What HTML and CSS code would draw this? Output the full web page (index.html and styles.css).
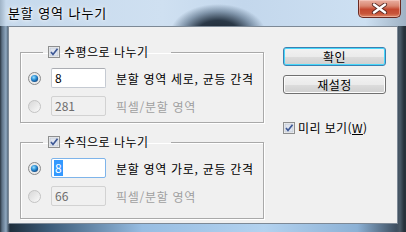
FILE: index.html
```html
<!DOCTYPE html>
<html lang="ko">
<head>
<meta charset="utf-8">
<link rel="stylesheet" href="styles.css">
</head>
<body>
<div class="window">
  <div class="titlebar">
    <span class="title">분할 영역 나누기</span>
    <div class="close">
      <svg width="17" height="11" viewBox="0 0 17 11"><path d="M3 1.5 L14 9.5 M14 1.5 L3 9.5" stroke="#5a2a24" stroke-width="4.2" stroke-linecap="round"/><path d="M3 1.5 L14 9.5 M14 1.5 L3 9.5" stroke="#ffffff" stroke-width="2.4" stroke-linecap="round"/></svg>
    </div>
  </div>
  <div class="client">
    <div class="groups">
      <fieldset class="group g1">
        <legend class="legend">
          <svg class="chk" width="12" height="12" viewBox="0 0 12 12"><rect x="0.5" y="0.5" width="11" height="11" fill="#f4f4f4" stroke="#8e8f8f"/><rect x="2" y="2" width="8" height="8" fill="#dfe4ee" stroke="#b7bec9" stroke-width="0.6"/><path d="M3 6 L5 8.5 L9.5 2.8" fill="none" stroke="#3d5895" stroke-width="1.7"/></svg>
          <span>수평으로 나누기</span>
        </legend>
        <div class="row">
          <svg class="radio" width="13" height="13" viewBox="0 0 13 13"><defs><radialGradient id="dot1" cx="0.4" cy="0.35" r="0.7"><stop offset="0" stop-color="#9fe3ff"/><stop offset="0.5" stop-color="#2b8fd6"/><stop offset="1" stop-color="#0d3f7a"/></radialGradient></defs><circle cx="6.5" cy="6.5" r="6" fill="#e9e9e9" stroke="#8a8a8a"/><circle cx="6.5" cy="6.5" r="3.6" fill="url(#dot1)"/></svg>
          <span class="field">8</span>
          <span class="label">분할 영역 세로, 균등 간격</span>
        </div>
        <div class="row">
          <svg class="radio" width="13" height="13" viewBox="0 0 13 13"><defs><linearGradient id="off1" x1="0" y1="0" x2="1" y2="1"><stop offset="0" stop-color="#d6d6d6"/><stop offset="1" stop-color="#fbfbfb"/></linearGradient></defs><circle cx="6.5" cy="6.5" r="6" fill="url(#off1)" stroke="#c3c3c3"/></svg>
          <span class="field off">281</span>
          <span class="label dim">픽셀/분할 영역</span>
        </div>
      </fieldset>
      <fieldset class="group g2">
        <legend class="legend">
          <svg class="chk" width="12" height="12" viewBox="0 0 12 12"><rect x="0.5" y="0.5" width="11" height="11" fill="#f4f4f4" stroke="#8e8f8f"/><rect x="2" y="2" width="8" height="8" fill="#dfe4ee" stroke="#b7bec9" stroke-width="0.6"/><path d="M3 6 L5 8.5 L9.5 2.8" fill="none" stroke="#3d5895" stroke-width="1.7"/></svg>
          <span>수직으로 나누기</span>
        </legend>
        <div class="row">
          <svg class="radio" width="13" height="13" viewBox="0 0 13 13"><defs><radialGradient id="dot2" cx="0.4" cy="0.35" r="0.7"><stop offset="0" stop-color="#9fe3ff"/><stop offset="0.5" stop-color="#2b8fd6"/><stop offset="1" stop-color="#0d3f7a"/></radialGradient></defs><circle cx="6.5" cy="6.5" r="6" fill="#e9e9e9" stroke="#8a8a8a"/><circle cx="6.5" cy="6.5" r="3.6" fill="url(#dot2)"/></svg>
          <span class="field focus"><span class="sel">8</span></span>
          <span class="label">분할 영역 가로, 균등 간격</span>
        </div>
        <div class="row">
          <svg class="radio" width="13" height="13" viewBox="0 0 13 13"><defs><linearGradient id="off2" x1="0" y1="0" x2="1" y2="1"><stop offset="0" stop-color="#d6d6d6"/><stop offset="1" stop-color="#fbfbfb"/></linearGradient></defs><circle cx="6.5" cy="6.5" r="6" fill="url(#off2)" stroke="#c3c3c3"/></svg>
          <span class="field off">66</span>
          <span class="label dim">픽셀/분할 영역</span>
        </div>
      </fieldset>
    </div>
    <div class="side">
      <div class="btn default">확인</div>
      <div class="btn">재설정</div>
      <div class="preview">
        <svg class="chk" width="12" height="12" viewBox="0 0 12 12"><rect x="0.5" y="0.5" width="11" height="11" fill="#f4f4f4" stroke="#8e8f8f"/><rect x="2" y="2" width="8" height="8" fill="#dfe4ee" stroke="#b7bec9" stroke-width="0.6"/><path d="M3 6 L5 8.5 L9.5 2.8" fill="none" stroke="#3d5895" stroke-width="1.7"/></svg>
        <span>미리 보기(<u>W</u>)</span>
      </div>
    </div>
  </div>
</div>
</body>
</html>
```

FILE: styles.css
```css
* { box-sizing: border-box; }
html, body { margin: 0; padding: 0; }
body {
  width: 406px;
  height: 232px;
  overflow: hidden;
  font-family: "Noto Sans CJK KR", "Noto Sans", sans-serif;
  font-size: 12px;
  color: #000;
}
.window {
  width: 406px;
  height: 232px;
  display: flex;
  flex-direction: column;
  background:
    linear-gradient(to right, #2a3540 0px, #5d7185 2px, #8fa8c0 6px, rgba(0,0,0,0) 10px, rgba(0,0,0,0) 396px, #4a5a68 400px, #27313a 404px),
    linear-gradient(to right, #17222c 0%, #3b5b78 12%, #97bde2 35%, #b3d2ef 65%, #8cb1d5 88%, #2b3744 100%);
}
.titlebar {
  height: 26px;
  display: flex;
  justify-content: space-between;
  align-items: flex-start;
  background:
    radial-gradient(ellipse 48px 30px at 218px 34px, #1b2530 0%, #2a3847 45%, rgba(70,92,115,0.55) 75%, rgba(120,150,180,0) 100%),
    linear-gradient(to right, #9fb3c6 0px, #c6d9ec 6px, #cfe0f1 40%, #c3d7ec 60%, #cde0f2 90%, #9fb2c4 100%);
}
.title {
  padding-left: 8px;
  padding-top: 4px;
  font-size: 13px;
  line-height: 17px;
  letter-spacing: 0.9px;
  text-shadow: 0 0 6px #fff, 0 0 3px #fff;
}
.close {
  width: 43px;
  height: 18px;
  margin-right: 5px;
  border: 1px solid #6a2a22;
  border-top: none;
  border-radius: 0 0 5px 5px;
  background: linear-gradient(to bottom, #eab0a2 0%, #d98670 35%, #c4482f 55%, #c8553a 80%, #df8a6a 100%);
  box-shadow: inset 0 0 0 1px rgba(255,220,210,0.45);
  display: flex;
  align-items: center;
  justify-content: center;
}
.client {
  margin: 0 8px;
  height: 198px;
  border: 1px solid #7d8996;
  background: #f0f0f0;
  display: flex;
  align-items: flex-start;
}
.groups {
  margin-left: 11px;
  width: 244px;
  display: flex;
  flex-direction: column;
}
.group {
  margin: 0;
  padding: 9px 0 6px 7px;
  min-width: 0;
  border: 1px solid #a9a9a9;
  box-shadow: 1px 1px 0 #fff, inset 1px 1px 0 #fff;
  display: flex;
  flex-direction: column;
  gap: 8px;
}
.g1 { margin-top: 18px; }
.g2 { margin-top: 12px; padding-bottom: 12px; }
.legend {
  margin-left: 15px;
  padding: 0 22px 0 5px;
  height: 14px;
  line-height: 14px;
  display: flex;
  align-items: center;
  gap: 4px;
  letter-spacing: 0.5px;
}
.chk { display: block; flex: none; }
.row {
  height: 20px;
  display: flex;
  align-items: center;
}
.radio { display: block; flex: none; margin-right: 10px; }
.field {
  width: 55px;
  height: 20px;
  border: 1px solid #c5cad2;
  border-top-color: #abadb3;
  border-radius: 2px;
  background: #fff;
  padding-left: 3px;
  line-height: 18px;
  font-size: 12px;
}
.field.off {
  background: #f0f0f0;
  border-color: #d2d2d2;
  color: #6d6d6d;
}
.field.focus {
  border-color: #7eb4ea;
  padding-left: 2px;
  padding-top: 1px;
  line-height: 16px;
}
.sel {
  display: inline-block;
  background: #3399ff;
  color: #fff;
  padding: 0 1px;
  height: 16px;
}
.label {
  margin-left: 10px;
  letter-spacing: 0.7px;
  white-space: nowrap;
}
.label.dim { color: #a0a0a0; }
.side {
  margin-left: 19px;
  margin-top: 20px;
  width: 103px;
  display: flex;
  flex-direction: column;
}
.btn {
  height: 19px;
  border: 1px solid #707070;
  border-radius: 3px;
  background: linear-gradient(to bottom, #f2f2f2 0%, #ebebeb 50%, #dddddd 51%, #cfcfcf 100%);
  box-shadow: inset 0 0 0 1px #fcfcfc;
  text-align: center;
  line-height: 17px;
  letter-spacing: 0.5px;
}
.btn + .btn { margin-top: 9px; }
.btn.default {
  border-color: #3c7fb1;
  box-shadow: inset 0 0 0 1px #48d8fb;
}
.preview {
  margin-top: 27px;
  height: 14px;
  line-height: 14px;
  display: flex;
  align-items: center;
  gap: 3px;
  letter-spacing: 0.4px;
}
.preview u { text-decoration-thickness: 1px; text-underline-offset: 1px; }
```
